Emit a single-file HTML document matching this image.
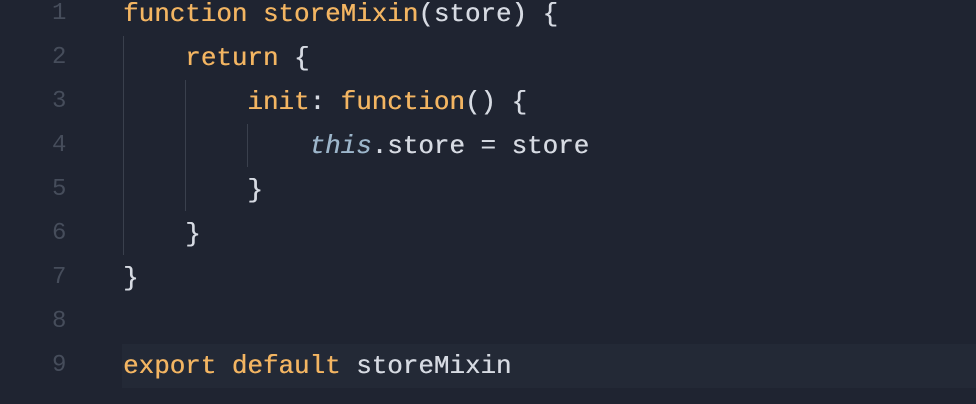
<!DOCTYPE html>
<html><head><style>
body{margin:0;width:976px;height:404px;background:#1f2431;overflow:hidden;font-family:"Liberation Mono",monospace;font-size:25.9px;}
.l{position:absolute;left:0;height:44px;line-height:44px;width:976px;white-space:pre;}
.n{position:absolute;left:0;width:124px;padding-right:0;text-align:left;text-indent:52px;color:#464d5b;font-size:24px;}
.c{position:absolute;left:123px;color:#d6dae2;text-shadow:0.4px 0 0 currentColor;}
.k{color:#f3b562;}
.t{color:#9db6cb;font-style:italic;}
.g{position:absolute;width:1px;background:#3a404d;}
.hl{position:absolute;left:122px;top:344px;width:854px;height:44px;background:#232936;}
</style></head><body>
<div class="hl"></div>
<div class="g" style="left:123px;top:36px;height:219px"></div>
<div class="g" style="left:185px;top:80px;height:131px"></div>
<div class="g" style="left:247px;top:124px;height:43px"></div>
<div class="l" style="top:-8px"><span class="n">1</span><span class="c"><span class="k">function storeMixin</span>(store) {</span></div>
<div class="l" style="top:36px"><span class="n">2</span><span class="c">    <span class="k">return</span> {</span></div>
<div class="l" style="top:80px"><span class="n">3</span><span class="c">        <span class="k">init</span>: <span class="k">function</span>() {</span></div>
<div class="l" style="top:124px"><span class="n">4</span><span class="c">            <span class="t">this</span>.store = store</span></div>
<div class="l" style="top:168px"><span class="n">5</span><span class="c">        }</span></div>
<div class="l" style="top:212px"><span class="n">6</span><span class="c">    }</span></div>
<div class="l" style="top:256px"><span class="n">7</span><span class="c">}</span></div>
<div class="l" style="top:300px"><span class="n">8</span></div>
<div class="l" style="top:344px"><span class="n">9</span><span class="c"><span class="k">export default</span> storeMixin</span></div>
</body></html>
